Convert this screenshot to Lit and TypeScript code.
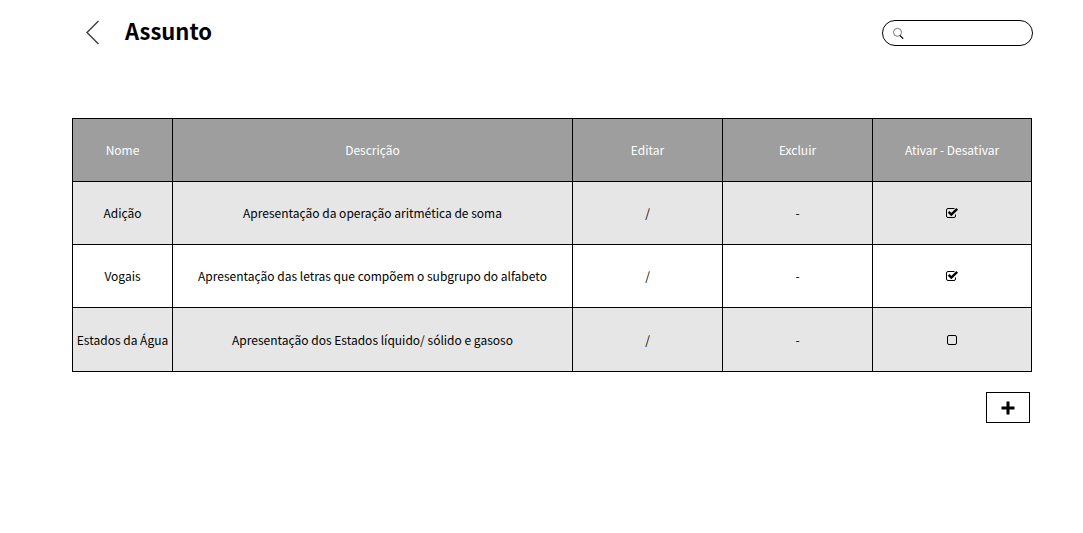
import { LitElement, html, css, svg } from "lit";
import { customElement, state } from "lit/decorators.js";

interface Subject {
  name: string;
  description: string;
  active: boolean;
}

@customElement("app-root")
export class AppRoot extends LitElement {
  static styles = css`
    :host {
      display: block;
      min-height: 100vh;
      box-sizing: border-box;
      padding: 16px 51px 24px 72px;
      background: #fff;
      color: #000;
      font-family: "Noto Sans CJK JP", "Noto Sans", sans-serif;
      font-size: 12px;
      line-height: 20px;
    }
    button,
    input {
      font: inherit;
      color: inherit;
    }
    .header {
      display: flex;
      align-items: center;
      height: 34px;
      margin-bottom: 68px;
    }
    .back {
      display: flex;
      padding: 0 14px 0 13px;
    }
    .title {
      flex: 1;
      align-self: flex-start;
      margin: 0;
      font-size: 22px;
      line-height: 28px;
      font-weight: 700;
    }
    .search {
      display: flex;
      align-items: center;
      box-sizing: border-box;
      width: 151px;
      height: 26px;
      margin-right: -1px;
      padding: 0 10px;
      gap: 6px;
      border: 1px solid #000;
      border-radius: 13px;
    }
    .search-icon {
      flex: none;
    }
    .search-input {
      flex: 1;
      min-width: 0;
      padding: 0;
      border: 0;
      outline: 0;
      background: none;
    }
    .table {
      width: 100%;
      table-layout: fixed;
      border-collapse: collapse;
      text-align: center;
    }
    .col-name {
      width: 100px;
    }
    .col-action {
      width: 150px;
    }
    .col-active {
      width: 159px;
    }
    .cell {
      height: 62px;
      padding: 0;
      border: 1px solid #000;
      font-weight: 400;
    }
    .head .cell {
      background: #9e9e9e;
      color: #fff;
    }
    .row:nth-child(odd) .cell {
      background: #e6e6e6;
    }
    .row:last-child .cell {
      height: 63px;
    }
    .action {
      padding: 0 8px;
      border: 0;
      background: none;
      cursor: pointer;
    }
    .toggle {
      display: grid;
      justify-content: center;
      cursor: pointer;
    }
    .check,
    .toggle-icon {
      grid-area: 1 / 1;
      width: 14px;
      height: 14px;
      margin: 0;
    }
    .check {
      appearance: none;
    }
    .footer {
      display: flex;
      justify-content: flex-end;
      margin-top: 20px;
      padding-right: 2px;
    }
    .add {
      display: flex;
      align-items: center;
      justify-content: center;
      width: 44px;
      height: 31px;
      padding: 0;
      border: 1px solid #000;
      background: #fff;
      cursor: pointer;
    }
  `;

  @state() private query = "";

  @state() private subjects: Subject[] = [
    { name: "Adição", description: "Apresentação da operação aritmética de soma", active: true },
    { name: "Vogais", description: "Apresentação das letras que compõem o subgrupo do alfabeto", active: true },
    { name: "Estados da Água", description: "Apresentação dos Estados líquido/ sólido e gasoso", active: false },
  ];

  private toggle(subject: Subject) {
    this.subjects = this.subjects.map((s) => (s === subject ? { ...s, active: !s.active } : s));
  }

  private search(event: Event) {
    this.query = (event.target as HTMLInputElement).value.toLowerCase();
  }

  private renderRow(subject: Subject) {
    return html`
      <tr class="row">
        <td class="cell">${subject.name}</td>
        <td class="cell">${subject.description}</td>
        <td class="cell"><button class="action" aria-label="Editar ${subject.name}">/</button></td>
        <td class="cell"><button class="action" aria-label="Excluir ${subject.name}">-</button></td>
        <td class="cell">
          <label class="toggle">
            <input
              class="check"
              type="checkbox"
              aria-label="Ativar ${subject.name}"
              .checked=${subject.active}
              @change=${() => this.toggle(subject)}
            />
            <svg class="toggle-icon" viewBox="0 0 14 14" fill="none" stroke="#000" aria-hidden="true">
              ${subject.active
                ? svg`<path d="M10.5 8.5v1.500a1.500 1.500 0 0 1-1.500 1.500H3a1.500 1.500 0 0 1-1.500-1.500v-6A1.500 1.500 0 0 1 3 2.500h6.500" />
                    <path d="M3.600 5.800 6.300 8.500 12.200 2.900" stroke-width="2.400" />`
                : svg`<rect x="2.500" y="2.500" width="9" height="9" rx="1.500" />`}
            </svg>
          </label>
        </td>
      </tr>
    `;
  }

  render() {
    const rows = this.subjects.filter((s) => s.name.toLowerCase().includes(this.query));
    return html`
      <header class="header">
        <a class="back" href="#" aria-label="Voltar">
          <svg width="26" height="26" viewBox="0 0 26 26" fill="none" stroke="#444" stroke-width="1.500">
            <path d="M13.500 1 2 12.500 13.500 24" />
          </svg>
        </a>
        <h1 class="title">Assunto</h1>
        <label class="search">
          <svg class="search-icon" width="11" height="12" viewBox="0 0 11 12" fill="none">
            <circle cx="4.500" cy="5.300" r="4" stroke="#555" stroke-width="0.800" />
            <path d="M6.800 8.300 10.200 11.700" stroke="#000" stroke-width="1.200" />
          </svg>
          <input class="search-input" type="text" aria-label="Pesquisar" @input=${this.search} />
        </label>
      </header>
      <main>
        <table class="table">
          <colgroup>
            <col class="col-name" />
            <col />
            <col class="col-action" />
            <col class="col-action" />
            <col class="col-active" />
          </colgroup>
          <thead class="head">
            <tr>
              <th class="cell" scope="col">Nome</th>
              <th class="cell" scope="col">Descrição</th>
              <th class="cell" scope="col">Editar</th>
              <th class="cell" scope="col">Excluir</th>
              <th class="cell" scope="col">Ativar - Desativar</th>
            </tr>
          </thead>
          <tbody>
            ${rows.map((s) => this.renderRow(s))}
          </tbody>
        </table>
        <div class="footer">
          <button class="add" aria-label="Adicionar">
            <svg width="14" height="14" viewBox="0 0 14 14" fill="none" stroke="#000" stroke-width="3">
              <path d="M7 0.500V13.500M0.500 7H13.500" />
            </svg>
          </button>
        </div>
      </main>
    `;
  }
}
